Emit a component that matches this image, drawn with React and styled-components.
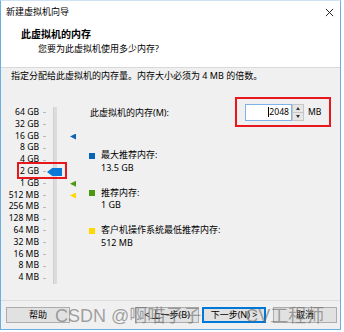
import styled, { createGlobalStyle } from "styled-components";

const GlobalStyle = createGlobalStyle`
  html, body { margin: 0; padding: 0; background: #ffffff; }
  body { font-family: "Noto Sans", "Noto Sans CJK SC", sans-serif; font-size: 9px; color: #000; }
`

const ROW = 11.8
const SIZES = ['64 GB', '32 GB', '16 GB', '8 GB', '4 GB', '2 GB', '1 GB', '512 MB', '256 MB', '128 MB', '64 MB', '32 MB', '16 MB', '8 MB', '4 MB']

export default function App(){
    return(
        <>
        <GlobalStyle/>
        <Window>
            <TitleBar>
                <Title>新建虚拟机向导</Title>
                <Close viewBox="0 0 10 10">
                    <path d="M1 1 L9 9 M9 1 L1 9" stroke="#222" strokeWidth="1.1"/>
                </Close>
            </TitleBar>
            <Header>
                <HeaderTitle>此虚拟机的内存</HeaderTitle>
                <HeaderSub>您要为此虚拟机使用多少内存?</HeaderSub>
            </Header>

            <Body>
                <Hint>指定分配给此虚拟机的内存量。内存大小必须为 4 MB 的倍数。</Hint>
                <Main>
                    <Slider>
                        <Labels>
                            {SIZES.map(s => <Label key={s}>{s}</Label>)}
                        </Labels>
                        <Ticks>
                            {SIZES.map(s => <Tick key={s}/>)}
                        </Ticks>
                        <Track/>
                        <Marker $row={2} $color="#0a64b4"/>
                        <Marker $row={6} $color="#4b9a0e"/>
                        <Marker $row={7} $color="#ffd800"/>
                        <Thumb $row={5}/>
                        <Highlight/>
                    </Slider>

                    <Panel>
                        <InputRow>
                            <span>此虚拟机的内存(M):</span>
                            <RedBox>
                                <Field><Caret/>2048</Field>
                                <Spinner>
                                    <SpinHalf><UpArrow/></SpinHalf>
                                    <SpinHalf><DownArrow/></SpinHalf>
                                </Spinner>
                                <Unit>MB</Unit>
                            </RedBox>
                        </InputRow>

                        <Legend>
                            <LegendItem>
                                <Square $color="#0a64b4"/>
                                <div>最大推荐内存:<br/>13.5 GB</div>
                            </LegendItem>
                            <LegendItem>
                                <Square $color="#4b9a0e"/>
                                <div>推荐内存:<br/>1 GB</div>
                            </LegendItem>
                            <LegendItem>
                                <Square $color="#ffd800"/>
                                <div>客户机操作系统最低推荐内存:<br/>512 MB</div>
                            </LegendItem>
                        </Legend>
                    </Panel>
                </Main>
            </Body>

            <Footer>
                <Button>帮助</Button>
                <Spacer/>
                <Button>&lt; 上一步(B)</Button>
                <Button $default>下一步(N) &gt;</Button>
                <Button $gap>取消</Button>
            </Footer>

            <Watermark>
                <span>CSDN @啊喵子子</span>
                <WatermarkTail>CV工程师</WatermarkTail>
            </Watermark>
        </Window>
        </>
    )
}

const Window = styled.div`
    position: relative;
    box-sizing: border-box;
    width: 341px;
    height: 330px;
    border: 1px solid #6aaee6;
    border-top-color: #cfe3f4;
    background-color: #f0f0f0;
    display: flex;
    flex-direction: column;
    overflow: hidden;
`
const TitleBar = styled.div`
    height: 22px;
    background-color: #fff;
    display: flex;
    align-items: center;
    justify-content: space-between;
    padding: 0 5px 0 5px;
`
const Title = styled.span`
    font-size: 9px;
    line-height: 12px;
`
const Close = styled.svg`
    width: 9px;
    height: 9px;
    margin-right: 1px;
`
const Header = styled.div`
    height: 44px;
    background-color: #fff;
    border-bottom: 1px solid #d9d9d9;
    display: flex;
    flex-direction: column;
    padding-left: 20px;
`
const HeaderTitle = styled.div`
    font-size: 10px;
    font-weight: 700;
    line-height: 14px;
    margin-top: 4px;
`
const HeaderSub = styled.div`
    font-size: 9px;
    line-height: 12px;
    margin-top: 2px;
    padding-left: 17px;
`
const Body = styled.div`
    display: flex;
    flex-direction: column;
`
const Hint = styled.div`
    line-height: 12px;
    margin-top: 2px;
    padding-left: 10px;
`
const Main = styled.div`
    display: flex;
    margin-top: 8px;
`
const Slider = styled.div`
    position: relative;
    width: 88px;
    display: flex;
    padding-top: 17px;
`
const Labels = styled.div`
    width: 38px;
    display: flex;
    flex-direction: column;
    align-items: flex-end;
`
const Label = styled.div`
    height: ${ROW}px;
    line-height: ${ROW}px;
    font-size: 8.6px;
    white-space: nowrap;
`
const Ticks = styled.div`
    width: 3px;
    margin-left: 4px;
    display: flex;
    flex-direction: column;
`
const Tick = styled.div`
    height: ${ROW}px;
    display: flex;
    align-items: center;
    &::after{
        content: '';
        width: 3px;
        height: 1px;
        background-color: #b8b8b8;
    }
`
const Track = styled.div`
    width: 3px;
    height: ${ROW * 15}px;
    margin-left: 7px;
    background-color: #dcdcdc;
    border-left: 1px solid #d0d0d0;
`
const Marker = styled.div`
    position: absolute;
    left: 69px;
    top: ${p => 17 + (p.$row + 0.5) * ROW - 3}px;
    width: 6px;
    height: 6px;
    background-color: ${p => p.$color};
    clip-path: polygon(0 50%, 100% 0, 100% 100%);
`
const Thumb = styled.div`
    position: absolute;
    left: 46px;
    top: ${p => 17 + (p.$row + 0.5) * ROW - 4}px;
    width: 15px;
    height: 8px;
    background-color: #0a78d7;
    clip-path: polygon(0 50%, 35% 0, 100% 0, 100% 100%, 35% 100%);
`
const Highlight = styled.div`
    position: absolute;
    left: 16px;
    top: 72px;
    box-sizing: border-box;
    width: 50px;
    height: 17px;
    border: 2px solid #e8171b;
`
const Panel = styled.div`
    width: 242px;
    display: flex;
    flex-direction: column;
`
const InputRow = styled.div`
    display: flex;
    align-items: center;
    justify-content: space-between;
    margin-top: 7px;
    padding-left: 1px;
`
const RedBox = styled.div`
    box-sizing: border-box;
    width: 96px;
    height: 30px;
    border: 2px solid #e8171b;
    display: flex;
    align-items: center;
    padding-left: 8px;
`
const Field = styled.div`
    box-sizing: border-box;
    width: 47px;
    height: 17px;
    background-color: #fff;
    border: 1px solid #7eb4ea;
    display: flex;
    align-items: center;
    justify-content: flex-end;
    padding-right: 2px;
    font-size: 8.6px;
`
const Caret = styled.span`
    width: 1px;
    height: 10px;
    background-color: #000;
`
const Spinner = styled.div`
    box-sizing: border-box;
    width: 12px;
    height: 17px;
    border: 1px solid #c6c6c6;
    background-color: #e6e6e6;
    display: flex;
    flex-direction: column;
`
const SpinHalf = styled.div`
    flex: 1;
    display: flex;
    align-items: center;
    justify-content: center;
    & + &{ border-top: 1px solid #c6c6c6; }
`
const UpArrow = styled.span`
    width: 0;
    height: 0;
    border-left: 2.5px solid transparent;
    border-right: 2.5px solid transparent;
    border-bottom: 3px solid #333;
`
const DownArrow = styled(UpArrow)`
    border-bottom: none;
    border-top: 3px solid #333;
`
const Unit = styled.span`
    margin-left: 4px;
    font-size: 8.6px;
`
const Legend = styled.div`
    display: flex;
    flex-direction: column;
    gap: 12.5px;
    margin-top: 22px;
`
const LegendItem = styled.div`
    display: flex;
    align-items: flex-start;
    gap: 6px;
    line-height: 12.5px;
`
const Square = styled.span`
    width: 6px;
    height: 6px;
    margin-top: 3.5px;
    background-color: ${p => p.$color};
`
const Footer = styled.div`
    margin-top: auto;
    height: 27px;
    border-top: 1px solid #dcdcdc;
    display: flex;
    align-items: center;
    padding: 0 3px 1px 5px;
`
const Spacer = styled.div`
    flex: 1;
`
const Button = styled.div`
    box-sizing: border-box;
    width: 64px;
    height: 16px;
    margin-left: ${p => p.$gap ? '7px' : p.$default ? '3px' : '0'};
    background-color: #e1e1e1;
    border: 1px solid ${p => p.$default ? '#0078d7' : '#adadad'};
    box-shadow: ${p => p.$default ? 'inset 0 0 0 1px #0078d7' : 'none'};
    display: flex;
    align-items: center;
    justify-content: center;
    font-size: 9px;
    white-space: nowrap;
`
const Watermark = styled.div`
    position: absolute;
    left: 54px;
    top: 304px;
    display: flex;
    font-family: "Liberation Sans", "Noto Sans CJK SC", sans-serif;
    font-size: 18px;
    line-height: 22px;
    color: rgba(105, 105, 105, 0.6);
    white-space: nowrap;
    pointer-events: none;
`
const WatermarkTail = styled.span`
    margin-left: 44px;
`
